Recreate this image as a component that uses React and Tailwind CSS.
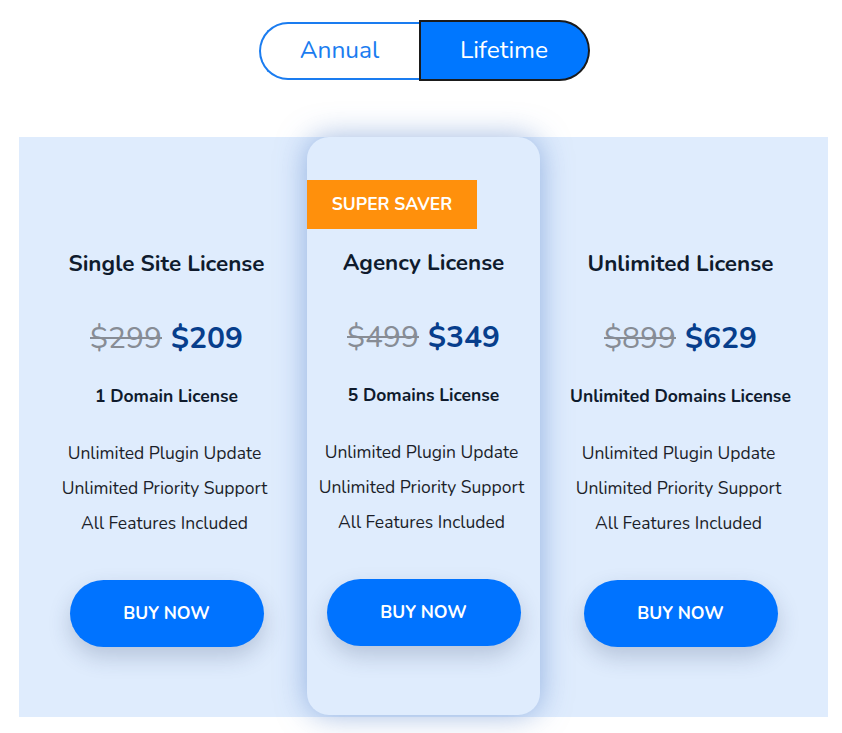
import { useState } from 'react'

const plans = [
  { title: 'Single Site License', old: '$299', price: '$209', domains: '1 Domain License' },
  { title: 'Agency License', old: '$499', price: '$349', domains: '5 Domains License', featured: true },
  { title: 'Unlimited License', old: '$899', price: '$629', domains: 'Unlimited Domains License' },
]

const features = ['Unlimited Plugin Update', 'Unlimited Priority Support', 'All Features Included']

function PlanBody({ plan }) {
  return (
    <>
      <h3 className="text-[22.5px] leading-[28px] font-bold text-[#0f1b2d]">{plan.title}</h3>
      <div className="mt-[41px] flex items-center justify-center gap-[9px] text-[30px] leading-[40px]">
        <span className="line-through text-[#878c95] decoration-[2px]">{plan.old}</span>
        <span className="font-bold text-[#073e8c]">{plan.price}</span>
      </div>
      <p className="mt-[25px] text-[17.5px] leading-[24px] font-bold text-[#0f1b2d]">{plan.domains}</p>
      <ul className="mt-[28px] -translate-x-[2px] text-[17.5px] leading-[35px] text-[#1c1f2a]">
        {features.map(f => <li key={f}>{f}</li>)}
      </ul>
      <button className="mt-[39px] w-[194px] h-[67px] rounded-full bg-[#0073ff] text-white text-[17.5px] font-bold shadow-[0_10px_22px_rgba(40,60,100,0.22)]">
        BUY NOW
      </button>
    </>
  )
}

export default function App() {
  const [mode, setMode] = useState('lifetime')

  return (
    <div className="min-h-[733px] bg-white pt-[20px]" style={{ fontFamily: '"Nunito", "Open Sans", sans-serif' }}>
      {/* Toggle */}
      <div className="flex justify-center items-center">
        <button
          onClick={() => setMode('annual')}
          className="w-[160px] h-[58px] rounded-l-full border-2 border-r-0 border-[#1a7cf0] text-[#1a7cf0] text-[24.5px] bg-white ml-[6px]"
        >
          Annual
        </button>
        <button
          onClick={() => setMode('lifetime')}
          className="w-[171px] h-[61px] rounded-r-full rounded-l-[4px] border-2 border-[#1b1b1b] bg-[#0077ff] text-white text-[24.5px]"
        >
          Lifetime
        </button>
      </div>

      {/* Plans */}
      <div className="ml-[19px] w-[809px] mt-[56px] bg-[#dfecfd] px-[19px] grid grid-cols-3 items-start text-center">
        {plans.map(plan =>
          plan.featured ? (
            <div key={plan.title} className="mx-[12px] rounded-[22px] bg-[#dfecfd] shadow-[0_0_30px_rgba(80,125,200,0.55)] pt-[43px] pb-[69px] flex flex-col items-center">
              <div className="self-start w-[170px] h-[49px] bg-[#ff900c] text-white text-[17.5px] font-bold flex items-center justify-center">
                SUPER SAVER
              </div>
              <div className="mt-[20px] flex flex-col items-center">
                <PlanBody plan={plan} />
              </div>
            </div>
          ) : (
            <div key={plan.title} className="pt-[113px] pb-[70px] flex flex-col items-center">
              <PlanBody plan={plan} />
            </div>
          )
        )}
      </div>
    </div>
  )
}
